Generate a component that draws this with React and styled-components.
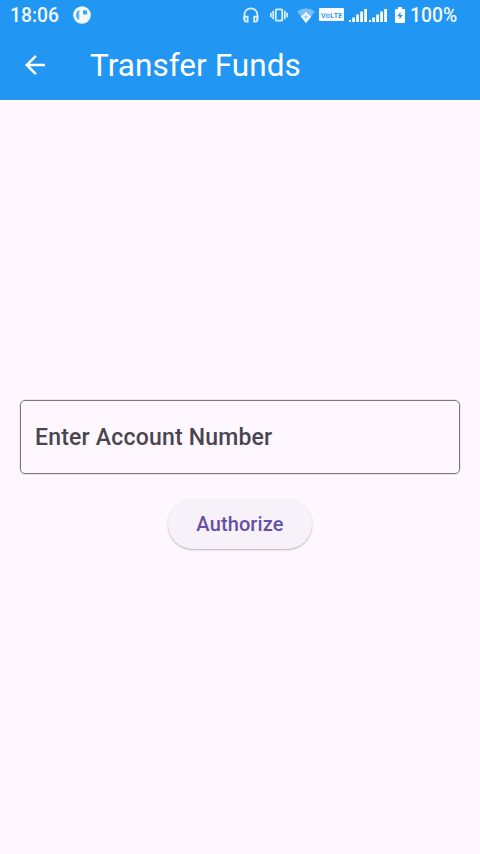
import React from 'react';
import styled, { createGlobalStyle } from 'styled-components';

const GlobalStyle = createGlobalStyle`
  * { box-sizing: border-box; }
  body { margin: 0; background: #fef7ff; font-family: Roboto, sans-serif; }
`;

const Screen = styled.div`
  height: 100vh;
  display: flex;
  flex-direction: column;
  background: #fef7ff;
`;

const Header = styled.header`
  height: 100px;
  flex: none;
  background: #2196f3;
  color: #fff;
`;

const StatusBar = styled.div`
  height: 30px;
  padding: 0 23px 0 10px;
  display: flex;
  align-items: center;
  justify-content: space-between;
`;

const StatusGroup = styled.div`
  display: flex;
  align-items: center;
`;

const StatusText = styled.span`
  height: 30px;
  font-size: 19.3px;
  font-weight: 500;
  line-height: 32px;
  letter-spacing: ${(p) => p.$spacing || '0'};
  opacity: 0.95;
`;

const StatusIcon = styled.svg`
  display: block;
  flex: none;
  margin-left: ${(p) => p.$gap}px;
`;

const NetworkBadge = styled.span`
  width: 25px;
  height: 13px;
  margin: 0 0 1px 4px;
  border-radius: 1px;
  background: #fff;
  color: #2196f3;
  font: 600 7.5px/14px "Noto Sans", sans-serif;
  letter-spacing: -0.1px;
  text-align: center;
  white-space: nowrap;
`;

const BatteryText = styled(StatusText)`
  width: 47px;
  margin-left: 5px;
`;

const AppBar = styled.div`
  height: 70px;
  padding-left: 20px;
  display: flex;
  align-items: center;
`;

const BackButton = styled.button`
  width: 30px;
  height: 30px;
  padding: 0;
  border: 0;
  background: none;
  color: inherit;
`;

const Title = styled.h1`
  margin: 2px 0 0 40px;
  font-size: 31.5px;
  font-weight: 400;
  line-height: 38px;
  letter-spacing: 0.05px;
`;

const Content = styled.main`
  flex: 1;
  padding: 0 20px 5px;
  display: flex;
  flex-direction: column;
  align-items: center;
  justify-content: center;
  gap: 25px;
`;

const Field = styled.label`
  width: 100%;
  height: 74px;
  padding-left: 14px;
  display: flex;
  align-items: center;
  border: 1px solid #7d7782;
  box-shadow: 0 0 0 0.5px rgba(125, 119, 130, 0.3);
  border-radius: 5px;
  color: #49454f;
  font-size: 23px;
  font-weight: 500;
  letter-spacing: 0.2px;
`;

const ActionButton = styled.button`
  width: 144px;
  height: 50px;
  padding: 0;
  border: 0;
  border-radius: 25px;
  background: #f7f2fa;
  box-shadow: 0 1px 2px rgba(0, 0, 0, 0.28);
  color: #6750a4;
  font: 500 20px/50px Roboto, sans-serif;
  letter-spacing: 0.12px;
`;

function SignalIcon({ gap }) {
  return (
    <StatusIcon $gap={gap} width="18" height="13" viewBox="0 0 18 13" fill="#fff">
      <path d="M0 11h2v2H0zM3.2 8.4h2.8v4.6H3.2zM7.2 5.6H10V13H7.2zM11.2 2.6H14V13h-2.8zM15.2 0H18v13h-2.8z" />
    </StatusIcon>
  );
}

export default function App() {
  return (
    <Screen>
      <GlobalStyle />
      <Header>
        <StatusBar>
          <StatusGroup>
            <StatusText $spacing="0">18:06</StatusText>
            <StatusIcon $gap={14} width="18" height="18" viewBox="0 0 18 18">
              <circle cx="9" cy="9" r="8.8" fill="#fff" fillOpacity="0.94" />
              <path d="M7.6 4C4.6 4.2 3 6 3 9c0 2.3 1.1 4.3 3.2 5V7C6.2 5.6 6.7 4.7 7.6 4z" fill="#2196f3" fillOpacity="0.75" />
              <path d="M10 4.2h3.6q1.2 1.8.4 4.2H10z" fill="#2196f3" fillOpacity="0.85" />
            </StatusIcon>
          </StatusGroup>
          <StatusGroup>
            <StatusIcon $gap={0} width="16" height="16" viewBox="0 0 16 16" fill="none" stroke="#dceefe" strokeWidth="1.8">
              <path d="M1.4 13V7.8a6.5 6.5 0 0 1 13 0V13" />
              <path d="M1.4 9.6h3.2v5H2.6q-1.2 0-1.2-1.5zM14.4 9.6h-3.2v5h2q1.2 0 1.2-1.5z" />
            </StatusIcon>
            <StatusIcon $gap={11} width="18" height="14" viewBox="0 0 18 14" fill="none" stroke="#dceefe">
              <rect x="5.8" y="1.4" width="6.4" height="11.2" rx="0.6" strokeWidth="1.8" />
              <path d="M3.2 2.8v8.4M.9 4.8v4.4M14.8 2.8v8.4M17.1 4.8v4.4" strokeWidth="1.7" />
            </StatusIcon>
            <StatusIcon $gap={9} width="18" height="15" viewBox="0 0 18 15">
              <path d="M0 3.5Q9-3 18 3.5L9 15z" fill="#fff" fillOpacity="0.38" />
              <path d="M9 3.6l1.5 2.2 3.7 2.6L9 15 3.8 8.4l3.7-2.6z" fill="#fff" />
              <path d="M9 6.5v5M6.5 9h5" fill="none" stroke="#2196f3" strokeWidth="1" strokeOpacity="0.55" />
            </StatusIcon>
            <NetworkBadge>VoLTE</NetworkBadge>
            <SignalIcon gap={5} />
            <SignalIcon gap={2} />
            <StatusIcon $gap={8} width="10" height="17" viewBox="0 0 10 17">
              <path d="M3 0h4v2h2q1 0 1 1v12q0 1-1 1H1q-1 0-1-1V3q0-1 1-1h2z" fill="#fff" />
              <path d="M5.5 5L2.2 9.3h2.3v3.2L7.8 8H5.5z" fill="#2196f3" />
            </StatusIcon>
            <BatteryText>100%</BatteryText>
          </StatusGroup>
        </StatusBar>
        <AppBar>
          <BackButton aria-label="Back">
            <svg width="30" height="30" viewBox="0 0 24 24" fill="currentColor" display="block">
              <path d="M20 11H7.83l5.59-5.59L12 4l-8 8 8 8 1.41-1.41L7.83 13H20v-2z" />
            </svg>
          </BackButton>
          <Title>Transfer Funds</Title>
        </AppBar>
      </Header>
      <Content>
        <Field>Enter Account Number</Field>
        <ActionButton>Authorize</ActionButton>
      </Content>
    </Screen>
  );
}
